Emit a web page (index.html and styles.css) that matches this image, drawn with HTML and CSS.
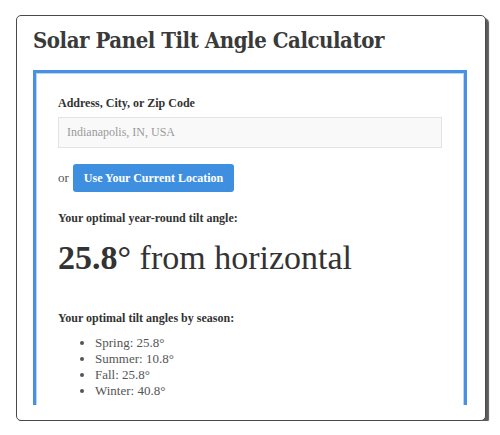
FILE: index.html
```html
<!DOCTYPE html>
<html lang="en">
<head>
<meta charset="utf-8">
<title>Solar Panel Tilt Angle Calculator</title>
<link rel="stylesheet" href="styles.css">
</head>
<body>
<div class="card">
  <h1 class="title">Solar Panel Tilt Angle Calculator</h1>
  <div class="viewport">
    <div class="calc">
      <label class="field-label" for="addr">Address, City, or Zip Code</label>
      <input class="field-input" id="addr" type="text" placeholder="Indianapolis, IN, USA">
      <div class="locate-row">
        <span class="or">or</span>
        <button class="locate-btn" type="button">Use Your Current Location</button>
      </div>
      <p class="section-label">Your optimal year-round tilt angle:</p>
      <p class="result"><strong>25.8°</strong> from horizontal</p>
      <p class="section-label season-label">Your optimal tilt angles by season:</p>
      <ul class="seasons">
        <li>Spring: 25.8°</li>
        <li>Summer: 10.8°</li>
        <li>Fall: 25.8°</li>
        <li>Winter: 40.8°</li>
      </ul>
      <div class="spacer"></div>
    </div>
  </div>
</div>
</body>
</html>
```
FILE: styles.css
```css
* { box-sizing: border-box; }
html, body { margin: 0; padding: 0; background: #ffffff; }
body {
  font-family: "Liberation Serif", "Times New Roman", serif;
  color: #333;
}
.card {
  margin: 15px 0 0 16px;
  width: 470px;
  height: 406px;
  border: 1px solid #4a4a4a;
  border-radius: 5px;
  box-shadow: 3px 3px 1px #5a5a5a;
  background: #fff;
  padding: 8px 18px 0 16px;
}
.title {
  margin: 0;
  font-family: "DejaVu Serif", serif;
  font-stretch: condensed;
  font-weight: bold;
  font-size: 22px;
  letter-spacing: -0.45px;
  line-height: 32px;
  color: #3a3a3a;
}
.viewport {
  margin-top: 14px;
  height: 335px;
  overflow: hidden;
}
.calc {
  border: 3px solid #4a90e2;
  box-shadow: inset 0 0 0 1px #b9d6f6;
  padding: 22px 22px 40px;
}
.field-label {
  display: block;
  font-weight: bold;
  font-size: 12px;
  line-height: 16px;
  color: #333;
}
.field-input {
  display: block;
  margin-top: 6px;
  width: 100%;
  height: 31px;
  border: 1px solid #e3e3e3;
  background: #f9f9f9;
  padding: 0 8px;
  font-family: "Liberation Serif", serif;
  font-size: 12px;
  color: #555;
}
.field-input::placeholder { color: #999; }
.locate-row {
  margin-top: 16px;
  display: flex;
  align-items: center;
  gap: 4px;
}
.or { font-size: 13px; color: #555; }
.locate-btn {
  height: 28px;
  border: 0;
  border-radius: 3px;
  background: #3f8fe0;
  color: #fff;
  font-family: "Liberation Serif", serif;
  font-weight: bold;
  font-size: 12px;
  padding: 0 11px;
}
.section-label {
  margin: 18px 0 0;
  font-weight: bold;
  font-size: 12px;
  line-height: 16px;
  color: #333;
}
.result {
  margin: 12px 0 0;
  font-size: 34px;
  line-height: 40px;
  color: #333;
}
.result strong { font-weight: bold; }
.season-label { margin-top: 32px; }
.seasons {
  margin: 9px 0 0;
  padding-left: 37px;
  font-size: 13px;
  line-height: 16px;
  color: #555;
}
.spacer { height: 40px; }
```
